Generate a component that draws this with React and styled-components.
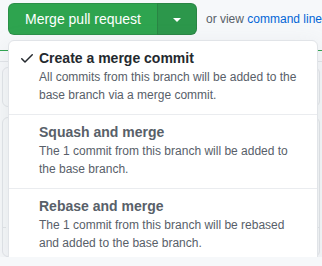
import React from "react";
import styled, { createGlobalStyle } from "styled-components";

//Global reset
const Global = createGlobalStyle`
  html, body {
    margin: 0;
    background: #f6f8fa;
    font-family: "Liberation Sans", Arial, sans-serif;
    color: #24292e;
  }
`;

const methods = [
  {
    title: "Create a merge commit",
    desc: "All commits from this branch will be added to the base branch via a merge commit.",
    selected: true,
  },
  {
    title: "Squash and merge",
    desc: "The 1 commit from this branch will be added to the base branch.",
  },
  {
    title: "Rebase and merge",
    desc: "The 1 commit from this branch will be rebased and added to the base branch.",
  },
];

const CheckIcon = () => (
  <svg width="16" height="16" viewBox="0 0 16 16" fill="currentColor">
    <path d="M13.78 4.22a.75.75 0 010 1.06l-7.25 7.25a.75.75 0 01-1.06 0L2.22 9.28a.75.75 0 011.06-1.06L6 10.94l6.72-6.72a.75.75 0 011.06 0z" />
  </svg>
);

const App = () => {
  return (
    <Page>
      <Global />
      <Toolbar>
        <BtnGroup>
          <MainButton>Merge pull request</MainButton>
          <CaretButton aria-label="Select merge method">
            <Caret />
          </CaretButton>
        </BtnGroup>
        <Hint>
          or view <a href="#cli">command line</a>
        </Hint>
        <Menu>
          {methods.map((m) => (
            <Item key={m.title}>
              <IconSlot>{m.selected && <CheckIcon />}</IconSlot>
              <div>
                <Title selected={m.selected}>{m.title}</Title>
                <Desc>{m.desc}</Desc>
              </div>
            </Item>
          ))}
        </Menu>
      </Toolbar>
      <MergeBox>
        <StatusStrip />
        <BoxArea>
          <Box height={38} />
          <Box height={138}>
            <DashedRule />
          </Box>
        </BoxArea>
      </MergeBox>
    </Page>
  );
};

//Styled thing
const Page = styled.div`
  padding: 3px 8px 0;
`;
const Toolbar = styled.div`
  position: relative;
  display: flex;
  align-items: center;
  height: 32px;
`;
const BtnGroup = styled.div`
  display: flex;
`;
const MainButton = styled.button`
  height: 32px;
  padding: 0 16px;
  background: #2ea44f;
  color: #fff;
  border: 1px solid rgba(27, 31, 35, 0.15);
  border-radius: 6px 0 0 6px;
  font: 14px/20px "Liberation Sans", Arial, sans-serif;
  white-space: nowrap;
`;
const CaretButton = styled.button`
  width: 40px;
  height: 32px;
  margin-left: -1px;
  padding: 0;
  display: flex;
  align-items: center;
  justify-content: center;
  background: #2c974b;
  border: 1px solid rgba(27, 31, 35, 0.15);
  border-radius: 0 6px 6px 0;
`;
const Caret = styled.span`
  width: 0;
  height: 0;
  margin-top: 1px;
  border-top: 4px solid #fff;
  border-left: 4px solid transparent;
  border-right: 4px solid transparent;
`;
const Hint = styled.span`
  margin-left: 9px;
  font-size: 12px;
  color: #586069;
  white-space: nowrap;
  a {
    color: #0366d6;
    text-decoration: none;
  }
`;
const Menu = styled.div`
  position: absolute;
  z-index: 2;
  top: 37px;
  left: 0;
  width: 310px;
  box-sizing: border-box;
  background: #fff;
  border: 1px solid #e1e4e8;
  border-radius: 6px;
  box-shadow: 0 8px 24px rgba(149, 157, 165, 0.2);
  overflow: hidden;
`;
const Item = styled.div`
  display: grid;
  grid-template-columns: 16px 1fr;
  column-gap: 4px;
  padding: 7px 16px 10px 10px;
  border-top: 1px solid #eaecef;
  &:first-child {
    border-top: 0;
  }
`;
const IconSlot = styled.div`
  height: 20px;
  display: flex;
  align-items: center;
  color: #24292e;
`;
const Title = styled.div`
  font-size: 14px;
  line-height: 20px;
  font-weight: 700;
  color: ${(p) => (p.selected ? "#24292e" : "#586069")};
`;
const Desc = styled.div`
  font-size: 12px;
  line-height: 18px;
  color: #586069;
`;
const MergeBox = styled.div`
  margin: 15px -8px 0;
  border-top: 1px solid #2ea44f;
`;
const StatusStrip = styled.div`
  height: 10px;
  border-bottom: 1px solid #e1e4e8;
`;
const BoxArea = styled.div`
  display: flex;
  flex-direction: column;
  gap: 10px;
  padding: 5px 2px 0;
`;
const Box = styled.div`
  position: relative;
  height: ${(p) => p.height}px;
  border: 1px solid #e1e4e8;
  border-radius: 6px;
`;
const DashedRule = styled.div`
  position: absolute;
  left: 0;
  right: 0;
  top: 109px;
  border-top: 1px dashed #e1e4e8;
`;

export default App;
